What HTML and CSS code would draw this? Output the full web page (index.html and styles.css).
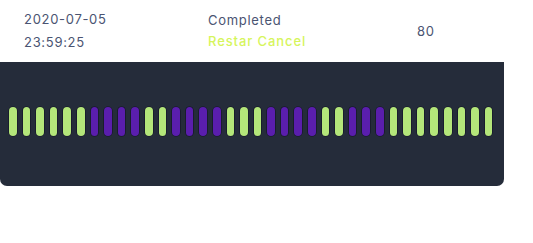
FILE: index.html
```html
<!DOCTYPE html>
<html>
<head>
<meta charset="utf-8">
<link rel="stylesheet" href="styles.css">
</head>
<body>
<div class="row">
  <div class="col col-date">
    <div>2020-07-05</div>
    <div>23:59:25</div>
  </div>
  <div class="col col-status">
    <div>Completed</div>
    <div class="actions">Restar Cancel</div>
  </div>
  <div class="col col-num">80</div>
</div>
<div class="panel">
  <div class="bars">
    <span class="bar g"></span><span class="bar g"></span><span class="bar g"></span><span class="bar g"></span><span class="bar g"></span><span class="bar g"></span>
    <span class="bar p"></span><span class="bar p"></span><span class="bar p"></span><span class="bar p"></span>
    <span class="bar g"></span><span class="bar g"></span>
    <span class="bar p"></span><span class="bar p"></span><span class="bar p"></span><span class="bar p"></span>
    <span class="bar g"></span><span class="bar g"></span><span class="bar g"></span>
    <span class="bar p"></span><span class="bar p"></span><span class="bar p"></span><span class="bar p"></span>
    <span class="bar g"></span><span class="bar g"></span>
    <span class="bar p"></span><span class="bar p"></span><span class="bar p"></span>
    <span class="bar g"></span><span class="bar g"></span><span class="bar g"></span><span class="bar g"></span><span class="bar g"></span><span class="bar g"></span><span class="bar g"></span><span class="bar g"></span>
  </div>
</div>
</body>
</html>
```
FILE: styles.css
```css
html, body {
  margin: 0;
  padding: 0;
  background: #ffffff;
}
body {
  font-family: "Inter", "Noto Sans", sans-serif;
  font-size: 13px;
  letter-spacing: 0.7px;
  color: #4a5472;
}
.row {
  display: grid;
  grid-template-columns: 184px 209px 1fr;
  align-items: center;
  height: 62px;
  padding-left: 24px;
  width: 480px;
}
.col-date {
  line-height: 23px;
}
.col-status {
  line-height: 21px;
}
.actions {
  color: #d6f55c;
  font-weight: 500;
  letter-spacing: 0.9px;
}
.panel {
  width: 504px;
  height: 124px;
  box-sizing: border-box;
  background: #252c3a;
  border-radius: 0 0 7px 7px;
  padding: 45px 0 0 9px;
}
.bars {
  display: flex;
  gap: 6px;
}
.bar {
  display: block;
  width: 7.6px;
  height: 29px;
  border-radius: 4px;
  box-shadow: 0 0 0 0.6px rgba(10, 10, 30, 0.7);
}
.g { background: #b4e67a; }
.p { background: #5a1ead; }
```
